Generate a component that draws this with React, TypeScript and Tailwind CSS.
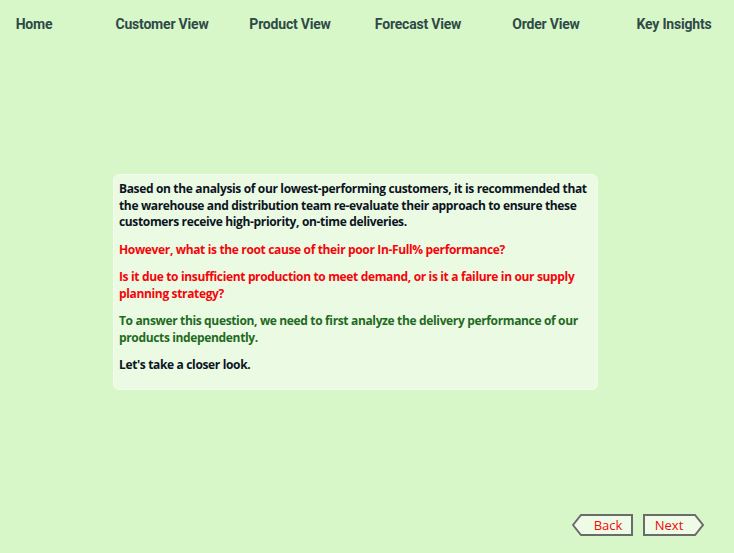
import React from "react";

const tabs = ["Home", "Customer View", "Product View", "Forecast View", "Order View", "Key Insights"];

function ArrowButton({ label, dir }: { label: string; dir: "left" | "right" }) {
  const points =
    dir === "left"
      ? "9,1 60,1 60,21 9,21 1,11"
      : "1,1 52,1 60,11 52,21 1,21";
  return (
    <button className="relative w-[62px] h-[23px] flex items-center justify-center">
      <svg className="absolute inset-0" width="62" height="23" viewBox="0 0 62 23">
        <polygon points={points} fill="#eefbe7" stroke="#6b6b6b" strokeWidth="2" strokeLinejoin="miter" />
      </svg>
      <span
        className={`relative text-[13px] font-medium text-[#f00a0a] ${dir === "left" ? "pl-[10px]" : "pr-[10px]"}`}
        style={{ fontFamily: '"Open Sans", "Liberation Sans", sans-serif' }}
      >
        {label}
      </span>
    </button>
  );
}

export default function App() {
  return (
    <div className="w-full min-h-[553px] h-screen bg-[#d7f7c9] flex flex-col overflow-hidden">
      {/* Nav */}
      <nav className="flex -ml-[30px] pt-[14px] h-[46px]">
        {tabs.map((t) => (
          <div
            key={t}
            className="w-[128px] shrink-0 text-center text-[14px] font-bold text-[#2f4a46] tracking-[-0.2px]"
            style={{ fontFamily: '"Roboto", "Liberation Sans", sans-serif' }}
          >
            {t}
          </div>
        ))}
      </nav>

      {/* Card */}
      <div className="mt-[128px] ml-[113px] w-[485px] h-[216px] rounded-[6px] bg-[#ebfae3] border border-[#f3fcee] px-[5px] pt-[6px]">
        <div
          className="text-[12px] font-bold leading-[16.5px] tracking-[-0.35px] flex flex-col gap-[11px]"
          style={{ fontFamily: '"Open Sans", "Noto Sans", sans-serif' }}
        >
          <p className="text-[#0b1422]">
            Based on the analysis of our lowest-performing customers, it is recommended that the warehouse and distribution team re-evaluate their approach to ensure these customers receive high-priority, on-time deliveries.
          </p>
          <p className="text-[#f5050a]">However, what is the root cause of their poor In-Full% performance?</p>
          <p className="text-[#f5050a]">
            Is it due to insufficient production to meet demand, or is it a failure in our supply planning strategy?
          </p>
          <p className="text-[#1f6a22]">
            To answer this question, we need to first analyze the delivery performance of our products independently.
          </p>
          <p className="text-[#0b1422]">Let's take a closer look.</p>
        </div>
      </div>

      {/* Buttons */}
      <div className="mt-auto mb-[16px] mr-[29px] flex justify-end gap-[9px]">
        <ArrowButton label="Back" dir="left" />
        <ArrowButton label="Next" dir="right" />
      </div>
    </div>
  );
}
